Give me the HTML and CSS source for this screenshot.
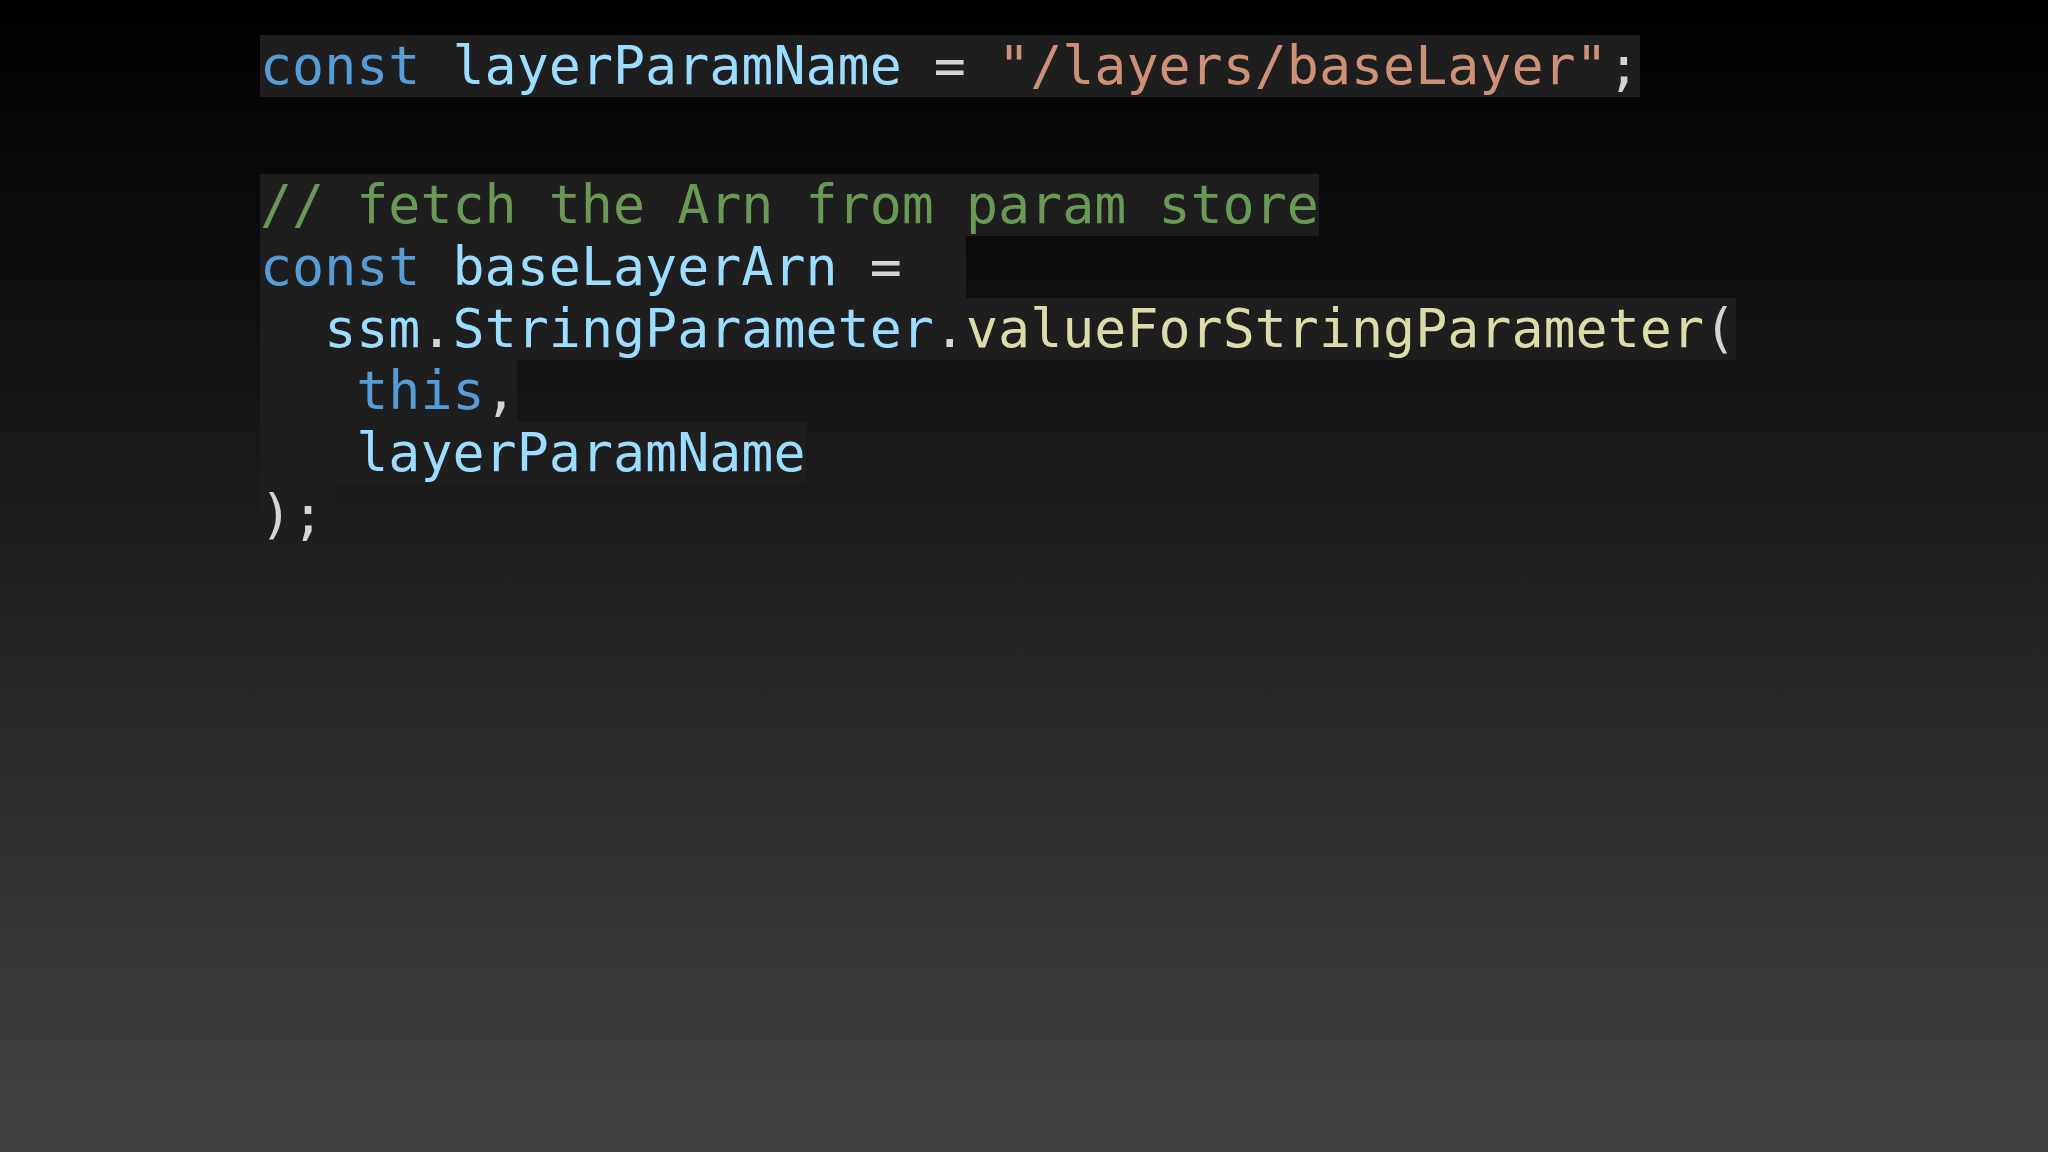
FILE: index.html
```html
<!DOCTYPE html>
<html lang="en">
<head>
<meta charset="utf-8">
<title>Code slide</title>
<link rel="stylesheet" href="styles.css">
</head>
<body>
<main class="slide">
  <div class="code">
    <div class="line"><span class="kw">const</span> <span class="id">layerParamName</span> <span class="op">=</span> <span class="str">"/layers/baseLayer"</span><span class="op">;</span></div>
    <div class="spacer"></div>
    <div class="line"><span class="cm">// fetch the Arn from param store</span></div>
    <div class="line"><span class="kw">const</span> <span class="id">baseLayerArn</span> <span class="op">=</span>  </div>
    <div class="line">  <span class="id">ssm</span><span class="op">.</span><span class="id">StringParameter</span><span class="op">.</span><span class="fn">valueForStringParameter</span><span class="op">(</span></div>
    <div class="line">   <span class="kw">this</span><span class="op">,</span></div>
    <div class="line">   <span class="id">layerParamName</span></div>
    <div class="line last"><span class="op">);</span></div>
  </div>
</main>
</body>
</html>
```

FILE: styles.css
```css
html, body {
  margin: 0;
  padding: 0;
}

body {
  width: 2048px;
  height: 1152px;
  overflow: hidden;
  background: linear-gradient(to bottom, #000000 0%, #111013 28%, #242424 55%, #424143 100%);
}

.slide {
  height: 100%;
  padding: 35px 0 0 260px;
  box-sizing: border-box;
}

.code {
  display: flex;
  flex-direction: column;
  align-items: flex-start;
  font-family: "DejaVu Sans Mono", monospace;
  font-size: 53.3px;
  line-height: 62px;
  color: #d4d4d4;
}

.line {
  white-space: pre;
  background: #1e1e1e;
  height: 62px;
}

.line.last {
  padding-right: 13px;
}

.spacer {
  height: 77px;
}

.kw { color: #569cd6; }
.id { color: #9cdcfe; }
.op { color: #d4d4d4; }
.str { color: #ce9178; }
.cm { color: #6a9955; }
.fn { color: #dcdcaa; }
```
